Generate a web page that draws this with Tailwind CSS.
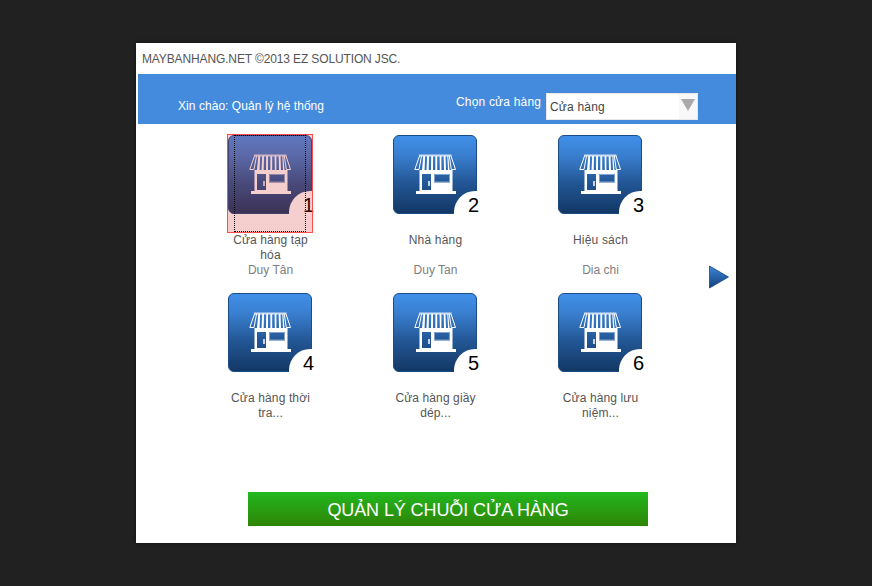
<!DOCTYPE html>
<html lang="vi">
<head>
<meta charset="utf-8">
<title>MAYBANHANG.NET</title>
<script src="https://cdn.jsdelivr.net/npm/@tailwindcss/browser@4"></script>
</head>
<body class="h-[586px] overflow-hidden bg-[#212121] pt-[43px] pl-[136px] font-['Liberation_Sans',Arial,sans-serif] text-[12px] leading-[15px] text-[#555]">
<svg class="absolute size-0">
  <defs>
    <linearGradient id="tile" x1="0" y1="0" x2="0" y2="1"><stop offset="0" stop-color="#4090ea"/><stop offset=".25" stop-color="#3a7fd0"/><stop offset=".6" stop-color="#235796"/><stop offset="1" stop-color="#123764"/></linearGradient>
    <linearGradient id="arrow" x1="0" y1="0" x2="0" y2="1"><stop offset="0" stop-color="#3c86da"/><stop offset="1" stop-color="#154078"/></linearGradient>
  </defs>
  <symbol id="shop" viewBox="0 0 84 79">
    <rect x=".5" y=".5" width="83" height="78" rx="5.5" fill="url(#tile)" stroke="#1b4c86"/>
    <path d="M61 79.500V77A21 21 0 0 1 82 56H84.500V79.500Z" fill="#fff"/>
    <path d="M26 19.500H58.500V21.500H26Z" fill="#fff" fill-opacity=".75"/>
    <path d="M26.500 21L21.800 34.500H26L28.500 21M58 21L62.500 34.500H58.300L56.300 21" fill="none" stroke="#fff" stroke-width="1"/>
    <path d="M30.300 21h1.800l-.5 14h-2.600zM34.200 21h1.800l-.3 14h-2.200zM38.200 21h1.800v14h-2zM42.400 21h1.800v14h-1.900zM46.600 21h1.800v14h-1.600zM50.700 21h1.800l.5 14h-2zM54.300 21h1l1.200 14h-1.500z" fill="#fff"/>
    <path fill="#fff" fill-rule="evenodd" d="M26.500 35H59.500V56H63V59H23V56H26.500ZM29 39V55H38V39ZM41 39V47.500H57V39Z"/>
    <path d="M41.500 39.500H56.500V47H41.500Z" fill="none" stroke="#a9c2df" stroke-width=".7"/>
    <path d="M36 46v5" stroke="#fff" stroke-width="1.500"/>
  </symbol>
</svg>
<main class="h-[500px] w-[600px] bg-white shadow-[0_0_4px_#111]">
  <div class="flex h-[31px] items-center pt-px pl-[6px] tracking-[-0.13px]">MAYBANHANG.NET ©2013 EZ SOLUTION JSC.</div>
  <header class="ml-[2px] flex h-[50px] items-start bg-[#448bdd] pl-[40px] text-white">
    <span class="mt-[25px] w-[278px] tracking-[0.05px] whitespace-nowrap">Xin chào: Quản lý hệ thống</span>
    <span class="mt-[21px] w-[90px] tracking-[0.18px] whitespace-nowrap">Chọn cửa hàng</span>
    <div class="mt-[19px] flex h-[27px] w-[152px] items-center justify-between border border-[#e8e8e8] bg-white pl-[3px] text-[#444]">
      <span class="pt-px tracking-[0.18px]">Cửa hàng</span>
      <span class="flex h-full w-[18px] items-start bg-[#f8f8f8] pt-[5px] pl-[2px]"><svg width="14" height="12" viewBox="0 0 14 12"><path d="M0 0H14L7 12Z" fill="#aaa"/></svg></span>
    </div>
  </header>
  <div class="flex h-[368px]">
    <section class="ml-[52px] grid w-[495px] grid-cols-3 grid-rows-[158px_158px] pt-[11px] text-center">
      <article class="flex flex-col items-center">
        <div class="relative mr-px h-[79px] w-[84px]"><svg class="size-full"><use href="#shop"/></svg><b class="absolute right-[-2px] bottom-[-2px] text-[20px] leading-[22px] font-normal text-black">1</b>
          <i class="absolute top-[-1px] left-[-1px] h-[99px] w-[86px] border border-[#ff4d4d] bg-[#d21e1e]/22 px-[6px]"><span class="block h-full border border-dotted border-black"></span></i>
        </div>
        <p class="mt-[19px] h-[30px] w-[86px] tracking-[0.1px]">Cửa hàng tạp hóa</p><p class="text-[#808080]">Duy Tân</p>
      </article>
      <article class="flex flex-col items-center">
        <div class="relative mr-px h-[79px] w-[84px]"><svg class="size-full"><use href="#shop"/></svg><b class="absolute right-[-2px] bottom-[-2px] text-[20px] leading-[22px] font-normal text-black">2</b></div>
        <p class="mt-[19px] h-[30px] w-[86px] tracking-[0.2px]">Nhà hàng</p><p class="text-[#808080]">Duy Tan</p>
      </article>
      <article class="flex flex-col items-center">
        <div class="relative mr-px h-[79px] w-[84px]"><svg class="size-full"><use href="#shop"/></svg><b class="absolute right-[-2px] bottom-[-2px] text-[20px] leading-[22px] font-normal text-black">3</b></div>
        <p class="mt-[19px] h-[30px] w-[86px] tracking-[0.2px]">Hiệu sách</p><p class="text-[#808080]">Dia chi</p>
      </article>
      <article class="flex flex-col items-center">
        <div class="relative mr-px h-[79px] w-[84px]"><svg class="size-full"><use href="#shop"/></svg><b class="absolute right-[-2px] bottom-[-2px] text-[20px] leading-[22px] font-normal text-black">4</b></div>
        <p class="mt-[19px] h-[30px] w-[86px] tracking-[0.12px]">Cửa hàng thời<br>tra...</p>
      </article>
      <article class="flex flex-col items-center">
        <div class="relative mr-px h-[79px] w-[84px]"><svg class="size-full"><use href="#shop"/></svg><b class="absolute right-[-2px] bottom-[-2px] text-[20px] leading-[22px] font-normal text-black">5</b></div>
        <p class="mt-[19px] h-[30px] w-[86px] tracking-[0.1px]">Cửa hàng giầy<br>dép...</p>
      </article>
      <article class="flex flex-col items-center">
        <div class="relative mr-px h-[79px] w-[84px]"><svg class="size-full"><use href="#shop"/></svg><b class="absolute right-[-2px] bottom-[-2px] text-[20px] leading-[22px] font-normal text-black">6</b></div>
        <p class="mt-[19px] h-[30px] w-[86px] tracking-[0.12px]">Cửa hàng lưu<br>niệm...</p>
      </article>
    </section>
    <svg class="mt-[141px] ml-[26px]" width="21" height="24" viewBox="0 0 21 24"><path d="M.5 1L19.500 12L.5 23Z" fill="url(#arrow)" stroke="#164684" stroke-width=".8" stroke-linejoin="round"/></svg>
  </div>
  <button class="ml-[112px] block h-[34px] w-[400px] bg-linear-to-b from-[#1fb81f] to-[#2c8404] pt-[2px] text-[18px] leading-[32px] tracking-[-0.1px] text-white">QUẢN LÝ CHUỖI CỬA HÀNG</button>
</main>
</body>
</html>
